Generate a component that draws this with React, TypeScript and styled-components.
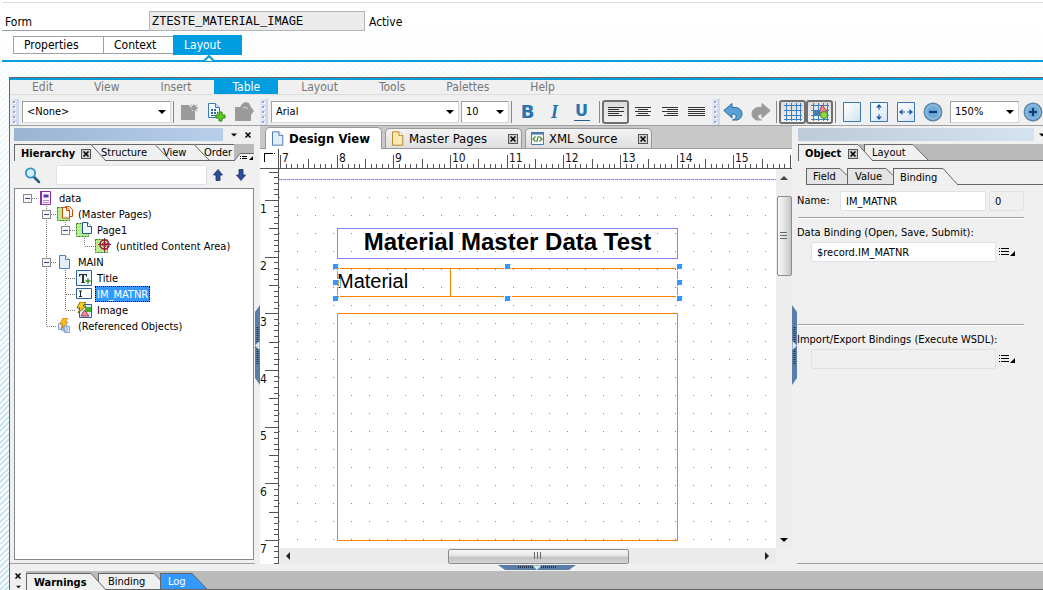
import React, { useEffect, useRef, useState } from "react";
import styled, { createGlobalStyle, css } from "styled-components";

const ui = `"DejaVu Sans Condensed", "DejaVu Sans", sans-serif`;
const c = {
  accent: "#009de0",
  face: "#f0f0f0",
  line: "#666",
  soft: "#a0a0a0",
  strip: "#bababa",
  orange: "#f78300",
  guide: "#8080ff",
  handle: "#3399ff",
};

const Global = createGlobalStyle`
  *, *::before, *::after { box-sizing: border-box; }
  body {
    margin: 0;
    font: 11px/16px ${ui};
    color: #000;
    background:
      linear-gradient(rgba(255,255,255,1) 0, rgba(255,255,255,.85) 70px, rgba(255,255,255,.1) 420px),
      repeating-linear-gradient(135deg, #c6e2f2 0 2px, #fff 2px 4px);
  }
  button, input, select {
    font: inherit; color: inherit; margin: 0; padding: 0;
    border: 0; border-radius: 0; background: none; outline: none;
  }
  svg { display: block; flex: none; }
  ul { list-style: none; margin: 0; padding: 0; }
`;

const Page = styled.div`
  height: 100vh;
  min-height: 480px;
  display: flex;
  flex-direction: column;
  overflow: hidden;
`;

/* ---------- form header ---------- */
const Header = styled.header`
  margin-left: 2px;
  margin-top: 2px;
  border-top: 1px solid #ddd;
  border-bottom: 2px solid ${c.accent};
  padding-top: 8px;
  background: rgba(255, 255, 255, 0.6);
  font-size: 12px;
`;
const FormRow = styled.div`
  display: flex;
  height: 20px;
  line-height: 22px;
`;
const FormLabel = styled.label`
  width: 147px;
  padding-left: 3px;
  border-bottom: 1px solid ${c.soft};
`;
const FormInput = styled.input`
  width: 216px;
  padding: 2px 2px 0;
  border: 1px solid #b4b4b4;
  background: #ebebeb;
  font: 12px "Liberation Mono", monospace;
`;
const Status = styled.span`
  padding-left: 4px;
`;
const FormTabs = styled.nav`
  display: flex;
  align-items: center;
  height: 20px;
  margin: 4px 0 0 11px;
`;
const FormTab = styled.button<{ $w: number; $on?: boolean }>`
  width: ${(p) => p.$w}px;
  height: ${(p) => (p.$on ? 20 : 18)}px;
  padding-left: 10px;
  text-align: left;
  border: 1px solid ${(p) => (p.$on ? c.accent : c.soft)};
  border-right-width: ${(p) => (p.$on ? 1 : 0)}px;
  background: ${(p) => (p.$on ? c.accent : "#fff")};
  color: ${(p) => (p.$on ? "#fff" : "#000")};
`;
const Notch = styled.svg`
  margin: 0 0 -1px 202px;
`;

/* ---------- editor frame ---------- */
const Editor = styled.main`
  flex: 1;
  min-height: 0;
  margin: 15px 0 0 9px;
  display: flex;
  flex-direction: column;
  border-left: 1px solid ${c.line};
  border-top: 1px solid ${c.line};
  background: ${c.face};
`;
const MenuBar = styled.nav`
  display: flex;
  flex: none;
  height: 17px;
  padding-left: 2px;
  border-top: 2px solid ${c.accent};
  border-bottom: 1px solid #dcdcdc;
`;
const MenuItem = styled.button<{ $on?: boolean }>`
  height: 14px;
  margin: 0 3px 0 2px;
  padding: 0 18px;
  font-size: 12px;
  line-height: 15px;
  color: ${(p) => (p.$on ? "#fff" : "#777")};
  background: ${(p) => (p.$on ? c.accent : "transparent")};
`;
const ToolBar = styled.div`
  display: flex;
  align-items: center;
  flex: none;
  height: 31px;
  padding: 3px 0 0 1px;
  border-bottom: 1px solid ${c.soft};
  overflow: hidden;
`;
const GripBox = styled.div`
  flex: none;
  width: 8px;
  height: 26px;
  margin-right: 3px;
  padding: 1px 2px;
  background: linear-gradient(90deg, #e4eaf6, #ccd6ec);
`;
const Rule = styled.span<{ $before?: number }>`
  flex: none;
  width: 1px;
  height: 22px;
  margin: 0 2px 0 ${(p) => p.$before ?? 0}px;
  background: #888;
`;
const Tool = styled.button<{ $pressed?: boolean; $w?: number }>`
  flex: none;
  display: grid;
  place-items: center;
  width: ${(p) => p.$w ?? 27}px;
  height: 24px;
  border-radius: 3px;
  ${(p) =>
    p.$pressed &&
    css`
      border: 2px solid #707070;
      background: linear-gradient(#dcdcdc, #f2f2f2);
    `}
`;
const Letter = styled.span<{ $i?: boolean; $u?: boolean }>`
  width: 16px;
  height: 18px;
  text-align: center;
  font: ${(p) => (p.$i ? "italic bold 18px/18px 'Liberation Serif', serif" : "bold 18px/18px 'DejaVu Sans', sans-serif")};
  ${(p) => p.$u && "font-size: 16px; line-height: 16px; border-bottom: 1px solid #1f5f9a;"}
  color: #2b72b0;
`;
const ComboBox = styled.span<{ $w: number }>`
  flex: none;
  display: grid;
  align-items: center;
  width: ${(p) => p.$w}px;
  height: 22px;
  margin-right: 2px;
  border: 1px solid #d4d8dc;
  border-top-color: ${c.soft};
  border-left-color: ${c.soft};
  background: #fff;
  select {
    grid-area: 1 / 1;
    appearance: none;
    width: 100%;
    padding-left: 4px;
  }
  svg {
    grid-area: 1 / 1;
    justify-self: end;
    margin-right: 4px;
    pointer-events: none;
  }
`;
const Gap = styled.span<{ $w: number }>`
  flex: none;
  width: ${(p) => p.$w}px;
`;

const Work = styled.div`
  flex: 1;
  min-height: 0;
  display: flex;
`;
const Side = styled.aside<{ $w: number }>`
  flex: none;
  width: ${(p) => p.$w}px;
  display: flex;
`;
const SideBody = styled.div`
  flex: 1;
  min-width: 0;
  display: flex;
  flex-direction: column;
  padding-top: 2px;
`;
const SideFoot = styled.div`
  height: 8px;
  flex: none;
  border-top: 1px solid ${c.soft};
`;
const Splitter = styled.div`
  flex: none;
  display: flex;
  align-items: center;
  width: 5px;
  padding-bottom: 7px;
`;
const TitleRow = styled.div<{ $right?: boolean }>`
  display: flex;
  flex: none;
  height: 13px;
  align-items: center;
  margin: 0 ${(p) => (p.$right ? -2 : 4)}px 3px ${(p) => (p.$right ? 1 : 4)}px;
  gap: ${(p) => (p.$right ? 5 : 8)}px;
`;
const TitleBar = styled.div<{ $from: string; $to: string }>`
  flex: 1;
  height: 13px;
  background: linear-gradient(90deg, ${(p) => p.$from}, ${(p) => p.$to});
`;
const TabStrip = styled.div<{ $bg?: string; $indent?: number; $short?: boolean }>`
  position: relative;
  z-index: 0;
  display: flex;
  align-items: flex-start;
  flex: none;
  height: 17px;
  margin-left: ${(p) => p.$indent ?? 0}px;
  margin-right: ${(p) => (p.$short ? 1 : 0)}px;
  background: ${(p) => p.$bg ?? "transparent"};
  border-bottom: 1px solid ${c.line};
`;
const TabWrap = styled.button<{ $z: number; $pull: number; $on?: boolean }>`
  position: relative;
  z-index: ${(p) => p.$z};
  display: flex;
  flex: none;
  height: ${(p) => (p.$on ? 17 : 16)}px;
  margin-left: ${(p) => -p.$pull}px;
  text-align: left;
`;
const TabFace = styled.span<{ $w: number; $pad: number; $bg: string; $bold?: boolean; $fg?: string }>`
  display: flex;
  align-items: center;
  width: ${(p) => p.$w}px;
  height: 100%;
  padding: 1px 0 0 ${(p) => p.$pad}px;
  border-top: 1px solid ${c.line};
  border-left: 1px solid ${c.line};
  background: ${(p) => p.$bg};
  color: ${(p) => p.$fg ?? "#000"};
  font-weight: ${(p) => (p.$bold ? "bold" : "normal")};
  white-space: nowrap;
`;
const CloseBox = styled.span`
  flex: none;
  display: grid;
  place-items: center;
  width: 10px;
  height: 10px;
  margin-left: auto;
  border: 1px solid #555;
  background: #d0d0d0;
`;
const StripEnd = styled.span`
  margin-left: auto;
`;

/* ---------- hierarchy ---------- */
const SearchRow = styled.div`
  display: flex;
  flex: none;
  align-items: center;
  margin: 4px 5px 3px 14px;
  height: 20px;
`;
const Field = styled.input<{ $off?: boolean }>`
  flex: 1;
  min-width: 0;
  height: 20px;
  padding: 0 5px;
  border: 1px solid #dde1ea;
  border-radius: 2px;
  background: ${(p) => (p.$off ? c.face : "#fff")};
`;
const Tree = styled.ul`
  flex: 1;
  min-height: 0;
  margin: 0 1px 3px 4px;
  padding: 1px 3px;
  border: 1px solid #828790;
  background: #fff;
  overflow: hidden;
`;
const TreeRow = styled.li`
  display: flex;
  align-items: center;
  height: 16px;
`;
const TreeIcon = styled.span`
  flex: none;
  width: 22px;
  padding-left: 1px;
`;
const TreeText = styled.span<{ $sel?: boolean }>`
  margin-left: -2px;
  padding: 0 1px;
  height: 16px;
  line-height: 16px;
  white-space: nowrap;
  border: 1px dotted ${(p) => (p.$sel ? "#000" : "transparent")};
  background: ${(p) => (p.$sel ? c.handle : "transparent")};
  color: ${(p) => (p.$sel ? "#fff" : "#000")};
`;

/* ---------- design view ---------- */
const Center = styled.section`
  flex: 1;
  min-width: 0;
  display: flex;
  flex-direction: column;
`;
const DocTabs = styled.div`
  display: flex;
  flex: none;
  align-items: flex-end;
  gap: 3px;
  height: 23px;
  padding: 0 5px;
  background: #c8c8c8;
  border-bottom: 1px solid #999;
`;
const DocTab = styled.button<{ $w: number; $on?: boolean }>`
  display: flex;
  align-items: center;
  gap: 4px;
  width: ${(p) => p.$w}px;
  height: ${(p) => (p.$on ? 22 : 20)}px;
  margin-bottom: ${(p) => (p.$on ? -1 : 0)}px;
  padding: 0 3px 0 4px;
  border: 1px solid #999;
  border-bottom: 0;
  border-radius: 5px 5px 0 0;
  background: ${(p) => (p.$on ? "#fff" : "linear-gradient(#f4f4f4, #dedede)")};
  font-size: 13px;
  font-weight: ${(p) => (p.$on ? "bold" : "normal")};
  white-space: nowrap;
`;
const Board = styled.div`
  flex: 1;
  min-height: 0;
  display: grid;
  grid-template: 20px minmax(0, 1fr) 16px / 19px minmax(0, 1fr) 16px;
  background: linear-gradient(90deg, #fff 19px, ${c.face} 19px);
`;
const RulerTop = styled.div`
  grid-column: 2 / 4;
  overflow: hidden;
  background: #fff;
`;
const RulerSide = styled.div`
  grid-row: 2 / 4;
  grid-column: 1;
  overflow: hidden;
  background: #fff;
`;
const Canvas = styled.div`
  position: relative;
  overflow: hidden;
  background: #fff;
  font-family: "Liberation Sans", sans-serif;
`;
const Obj = styled.div<{ $y: number; $h: number; $color: string }>`
  position: absolute;
  left: 58px;
  width: 341px;
  top: ${(p) => p.$y}px;
  height: ${(p) => p.$h}px;
  border: 1px solid ${(p) => p.$color};
  white-space: nowrap;
`;
const TitleText = styled.div`
  text-align: center;
  font: bold 24px/26px "Liberation Sans", sans-serif;
`;
const Caption = styled.div`
  width: 114px;
  height: 27px;
  margin-left: -1px;
  border-right: 1px solid ${c.orange};
  font-size: 20px;
  line-height: 24px;
`;
const Handle = styled.i<{ $x: number; $y: number }>`
  position: absolute;
  left: ${(p) => p.$x}px;
  top: ${(p) => p.$y}px;
  width: 6px;
  height: 6px;
  outline: 1px solid #fff;
  border: 1px solid ${c.handle};
  border-width: 1px 1px 1px 1px;
  background: ${c.handle};
  background-clip: padding-box;
  border-right-color: transparent;
  border-bottom-color: transparent;
`;
const VBar = styled.div`
  display: flex;
  flex-direction: column;
  align-items: center;
  padding: 7px 0 6px;
  background: #ededed;
`;
const HBar = styled.div`
  display: flex;
  align-items: center;
  padding: 1px 7px;
  background: #ebebeb;
`;
const Thumb = styled.div<{ $v?: boolean }>`
  display: grid;
  place-items: center;
  border: 1px solid #8c8c8c;
  border-radius: 2px;
  ${(p) =>
    p.$v
      ? css`width: 15px; height: 80px; background: linear-gradient(90deg, #f6f6f6, #e6e6e6 45%, #c4c4c4);`
      : css`width: 181px; height: 15px; background: linear-gradient(#f6f6f6, #e6e6e6 45%, #c4c4c4 55%, #d4d4d4);`}
`;
const Stretch = styled.span<{ $n: number }>`
  flex: ${(p) => p.$n};
`;
const CenterFoot = styled.div`
  display: flex;
  justify-content: center;
  flex: none;
  height: 7px;
  padding: 1px 0 0 22px;
`;

/* ---------- object palette ---------- */
const PropRow = styled.div<{ $in?: boolean }>`
  display: flex;
  align-items: center;
  flex: none;
  gap: 3px;
  height: 20px;
  padding-left: ${(p) => (p.$in ? 14 : 0)}px;
  margin-right: ${(p) => (p.$in ? 28 : 19)}px;
`;
const PropLabel = styled.label`
  white-space: nowrap;
  line-height: 18px;
`;
const NameLabel = styled(PropLabel)`
  width: 40px;
`;
const CountBox = styled.div`
  display: flex;
  width: 35px;
`;
const Divider = styled.hr`
  height: 2px;
  margin: 6px 19px 5px 1px;
  border: 0;
  border-top: 1px solid ${c.soft};
  border-bottom: 1px solid #fff;
`;
const Spacer = styled.div<{ $h: number }>`
  height: ${(p) => p.$h}px;
  flex: none;
`;
const Fill = styled.div`
  flex: 1;
`;

/* ---------- report area ---------- */
const Report = styled.footer`
  display: flex;
  flex: none;
  height: 19px;
`;
const ReportButtons = styled.div`
  width: 16px;
  display: flex;
  flex-direction: column;
  align-items: center;
  justify-content: space-between;
  padding: 2px 0 1px;
`;
const ReportStrip = styled.div`
  flex: 1;
  padding-top: 2px;
  background: ${c.strip};
`;

/* ---------- drawings ---------- */
const Down = ({ s = 8 }: { s?: number }) => (
  <svg width={s} height="4" viewBox="0 0 8 4"><path d="M0 0h8L4 4z" fill="#000" /></svg>
);
const Cross = ({ s = 6 }: { s?: number }) => (
  <svg width={s} height={s} viewBox="0 0 6 6"><path d="M.5.5l5 5M5.5.5l-5 5" stroke="#000" strokeWidth="1.5" /></svg>
);
const Grip = () => (
  <GripBox>
    <svg width="4" height="24">
      {[1, 6, 11, 16, 21].map((y) => (
        <g key={y}><rect x="1" y={y + 1} width="2" height="2" fill="#fff" /><rect y={y} width="2" height="2" fill="#9aa5c0" /></g>
      ))}
    </svg>
  </GripBox>
);
const Slant = ({ h, fill, w = 15 }: { h: number; fill: string; w?: number }) => (
  <svg width={w} height={h} viewBox={`0 0 ${w} ${h}`}>
    <path d={`M0 0L${w} ${h}H0z`} fill={fill} />
    <path d={`M0 .5L${w} ${h}`} stroke={c.line} fill="none" />
  </svg>
);
const Corner = ({ fill }: { fill: string }) => (
  <svg width="7" height="16" viewBox="0 0 7 16">
    <path d="M0 0L7 7V16H0z" fill={fill} /><path d="M0 .5L7 7.5" stroke={c.line} fill="none" />
  </svg>
);
const ListIcon = () => (
  <svg width="16" height="10" viewBox="0 0 16 10" shapeRendering="crispEdges">
    <path d="M0 1h1M0 4h1M0 7h1M2 1h8M2 4h8M2 7h8" transform="translate(0 .5)" stroke="#000" />
    <path d="M11 9h5V4z" fill="#000" shapeRendering="auto" />
  </svg>
);
const Align = ({ rows }: { rows: [number, number][] }) => (
  <svg width="18" height="9" viewBox="0 0 18 9" shapeRendering="crispEdges">
    {rows.map(([x, w], i) => <rect key={i} x={x} y={i * 2} width={w} height="1" fill="#333" />)}
  </svg>
);
const alignLeft: [number, number][] = [[1, 16], [1, 11], [1, 16], [1, 11], [1, 14]];
const alignMid: [number, number][] = [[1, 16], [4, 10], [1, 16], [4, 10], [2, 14]];
const alignRight: [number, number][] = [[1, 16], [6, 11], [1, 16], [6, 11], [3, 14]];
const alignFull: [number, number][] = [[0, 17], [0, 17], [0, 17], [0, 17], [0, 17]];

const Sheet = ({ stroke = "#4f7fb5", fill = "#e4eefa", s = 15 }: { stroke?: string; fill?: string; s?: number }) => (
  <svg width={s} height={s} viewBox="0 0 15 15">
    <path d="M2.5.8h6.500l3.800 3.800v9.600H2.500z" fill={fill} stroke={stroke} />
    <path d="M9 .8v3.800h3.800" fill="#fff" stroke={stroke} />
  </svg>
);
const GreyNew = () => (
  <svg width="18" height="18" viewBox="0 0 18 18" fill="#9b9b9b">
    <path d="M0 2h8l2 3 1 3h3v9H0z" />
    <path d="M13 0l1 3 3-2-2 3 3 1-3 1 2 3-3-2-1 3-1-3-3 2 2-3-3-1 3-1-2-3 3 2z" />
  </svg>
);
const AddPage = () => (
  <svg width="20" height="20" viewBox="0 0 20 20">
    <path d="M1.500 1.500h7l4 4v10h-11z" fill="#f2f8fd" stroke="#3a7ab8" /><path d="M8.500 1.500v4h4" fill="#cfe3f5" stroke="#3a7ab8" />
    <path d="M4 7h2v2H4zM4 10h2v2H4zM7 7h2v2H7zM7 10h2v2H7zM10 10h1v2h-1zM4 13h5v1H4z" fill="#2a6aa8" />
    <path d="M12 10h3v3h3v3h-3v3h-3v-3H9v-3h3z" fill="#5ed01f" stroke="#2c8a0c" />
  </svg>
);
const GreyOut = () => (
  <svg width="20" height="20" viewBox="0 0 20 20" fill="#9b9b9b">
    <path d="M1 5h5l2-3 3-2 4 1 2 4 3 4-3 4v6H1z" /><path d="M9 6l3-1 2 2" fill="none" stroke="#d8d8d8" />
  </svg>
);
const Undo = ({ flip }: { flip?: boolean }) => (
  <svg width="20" height="19" viewBox="0 0 20 19">
    <g transform={flip ? "translate(20 0) scale(-1 1)" : undefined}>
      <path
        d="M.8 8.500L9 1.500v4c6-1 10 2 10 6.500 0 3-2 5-4.500 6H9.500c3-1 4.500-3 3-5-1-1-2-1-3.500-1v4z"
        fill={flip ? "#9b9b9b" : "#5aa2d4"} stroke={flip ? "#9b9b9b" : "#2b6a9c"} strokeLinejoin="round"
      />
    </g>
  </svg>
);
const GridIcon = ({ shapes }: { shapes?: boolean }) => (
  <svg width="20" height="20" viewBox="0 0 20 20">
    <path d="M1 3.500h18M1 8.500h18M1 13.500h18M1 17.500h18M3.500 1v18M8.500 1v18M13.500 1v18M17.500 1v18" stroke="#3a80bd" />
    {shapes && (
      <>
        <path d="M3 9h7v5H3z" fill="#3a80bd" />
        <path d="M12 3l5 6-8 2z" fill="#e88a96" stroke="#b5394c" />
        <circle cx="14" cy="13" r="3.500" fill="#8fd84a" stroke="#4b9420" />
      </>
    )}
  </svg>
);
const ZoomPage = ({ kind }: { kind?: "v" | "h" }) => (
  <svg width="18" height="20" viewBox="0 0 18 20">
    <defs>
      <linearGradient id="zp" x2="1" y2="1"><stop stopColor="#fff" /><stop offset="1" stopColor="#d3e3f2" /></linearGradient>
    </defs>
    <path d="M.5.500h17v19H.5z" fill="url(#zp)" stroke="#3c78b0" />
    {kind === "v" && <path d="M9 2l3 3.500H9.500V8h-1V5.500H6zM9 18l3-3.500H9.500V12h-1v2.500H6z" fill="#1d5fa5" />}
    {kind === "h" && <path d="M2 10l3.500-3v2.500H8v1H5.500V13zM16 10l-3.500-3v2.500H10v1h2.500V13z" fill="#1d5fa5" />}
  </svg>
);
const Round = ({ plus }: { plus?: boolean }) => (
  <svg width="20" height="20" viewBox="0 0 20 20">
    <circle cx="10" cy="10" r="8.700" fill="#8bbce0" stroke="#5785ac" strokeWidth="1.500" />
    <circle cx="10" cy="10" r="6" fill="#6fa9d6" />
    <path d={plus ? "M6 10h8M10 6v8" : "M6 10h8"} stroke="#0e3f78" strokeWidth="2.200" />
  </svg>
);
const Lens = () => (
  <svg width="17" height="17" viewBox="0 0 17 17">
    <path d="M9.500 9.500l5.500 5.500" stroke="#245a80" strokeWidth="2.500" strokeLinecap="round" />
    <circle cx="6.500" cy="6" r="4.600" fill="#d7f1fb" stroke="#2f93bd" strokeWidth="1.800" />
  </svg>
);
const Arrow = ({ down }: { down?: boolean }) => (
  <svg width="10" height="12" viewBox="0 0 10 12">
    <path d="M5 .5L9.500 6H7v5.500H3V6H.5z" fill="#2c4f9c" stroke="#1b2f66" strokeWidth=".8" transform={down ? "rotate(180 5 6)" : undefined} />
  </svg>
);
const XmlIcon = () => (
  <svg width="15" height="13" viewBox="0 0 15 13">
    <path d="M1.500.500h12v12h-12z" fill="#f2f7fc" stroke="#4a79ab" /><path d="M1 0h13v2.500H1z" fill="#4a79ab" />
    <path d="M5.500 4.500l-2.500 2.500 2.500 2.500M9.500 4.500L12 7 9.500 9.500M8.300 4.200L6.700 10" fill="none" stroke="#4c8a1e" strokeWidth="1.200" />
  </svg>
);
const SideGrip = ({ left }: { left?: boolean }) => (
  <svg width="5" height="80" viewBox="0 0 5 80">
    <g transform={left ? undefined : "translate(5 0) scale(-1 1)"}>
      <path d="M5 0v80L0 73V7z" fill="#5a7ea6" />
      <path d="M2.500 22v15M2.500 44v15" stroke="#26374d" strokeWidth="2" strokeDasharray="1 1" />
    </g>
    <path d={left ? "M4.500 36v9L0 40.500z" : "M.5 36v9L5 40.500z"} fill="#dfe8f2" />
  </svg>
);

type IconName = "form" | "masters" | "page" | "area" | "sheet" | "text" | "input" | "image" | "refs";
const NodeIcon = ({ name }: { name: IconName }) => {
  const green = <path d="M.5 1.500h12v13H.5z" fill="#b9ee8e" stroke="#2c7a16" strokeDasharray="2 1" />;
  return (
    <svg width="16" height="16" viewBox="0 0 16 16">
      {name === "form" && (
        <>
          <path d="M2.500 1.500h10v13h-10z" fill="#fbf3ff" stroke="#8a2da8" />
          <path d="M2 1h2v14H2z" fill="#8a2da8" />
          <path d="M5.500 4.500h5v3h-5z" fill="#5a3a9a" /><path d="M5 10.500h6M5 12.500h6" stroke="#b98acb" />
        </>
      )}
      {name === "masters" && (
        <>
          {green}
          <path d="M8.500.500h4l3 3v7h-7z" fill="#fff1e0" stroke="#c8500a" />
          <path d="M5.500 1.500h4.500l2.500 2.500v8h-7z" fill="#fff8ee" stroke="#c8500a" /><path d="M9.500 2v2.500h3" fill="none" stroke="#c8500a" />
        </>
      )}
      {name === "page" && (
        <>
          {green}
          <path d="M6.500.500h5l4 4v7h-9z" fill="#eef6fd" stroke="#1e5a96" /><path d="M11.500.500v4h4" fill="#fff" stroke="#1e5a96" />
        </>
      )}
      {name === "area" && (
        <>
          {green}
          <circle cx="9.500" cy="6.500" r="4.500" fill="none" stroke="#a01842" strokeWidth="1.500" />
          <circle cx="9.500" cy="6.500" r="2" fill="none" stroke="#a01842" />
          <path d="M9.500 0v14M3 6.500h13" stroke="#a01842" />
        </>
      )}
      {name === "sheet" && (
        <>
          <path d="M2.500 1.500h6l4 4v9h-10z" fill="#e4eefa" stroke="#4f7fb5" /><path d="M8.500 1.500v4h4" fill="#fff" stroke="#4f7fb5" />
        </>
      )}
      {name === "text" && (
        <>
          <path d="M.5.500h15v15H.5z" fill="#eef5fb" stroke="#2a6298" />
          <path d="M3 4h8v2.500h-1L9.500 5H8v7l1 .500v.5H5v-.5l1-.500V5H4.500L4 6.500H3z" fill="#333" />
          <path d="M12 8.500v5M9.500 11h5" stroke="#2f9a1c" strokeWidth="1.500" />
        </>
      )}
      {name === "input" && (
        <>
          <path d="M.5 2.500h15v10H.5z" fill="#fff" stroke="#2a6298" /><path d="M3 5h3M3 10.500h3M4.500 5v5.500" stroke="#222" />
        </>
      )}
      {name === "image" && (
        <>
          <path d="M3.500 2.500h12v13h-12z" fill="#dcebf8" stroke="#2a6298" /><path d="M9 5h6v5H9z" fill="#3fae2a" />
          <path d="M8.500 8l4.500 6H5z" fill="#e8929c" stroke="#b5394c" />
          <path d="M4 0h6L7 4h3L2 11l2-5H1z" fill="#ffd21a" stroke="#5a4206" strokeWidth=".8" />
        </>
      )}
      {name === "refs" && (
        <>
          <path d="M7.500 8.500h5v6h-5zM5 7h5v6H5zM1.500 5.500h5v6h-5z" fill="#dfe9f5" stroke="#8aa8ca" />
          <path d="M6 0h5L8 4h3L4 11l2-5H3z" fill="#ffc21a" stroke="#c07808" strokeWidth=".8" />
        </>
      )}
    </svg>
  );
};

/* One 19px column of the tree: guide lines and, where asked, the collapse box. */
type Cell = "blank" | "line" | "tee" | "end" | "root" | "boxTee" | "rootBox";
const Guide = ({ kind }: { kind: Cell }) => {
  const up = kind !== "blank" && kind !== "rootBox";
  const down = kind === "line" || kind === "tee" || kind === "boxTee";
  const right = kind !== "blank" && kind !== "line";
  const box = kind === "boxTee" || kind === "rootBox" || kind === "root";
  return (
    <svg width="19" height="16" viewBox="0 0 19 16" shapeRendering="crispEdges">
      <g stroke="#777" strokeDasharray="1 1">
        {up && <path d="M9.500 0v8" />}
        {down && <path d="M9.500 8v8" />}
        {right && <path d="M10 8.500h10" />}
      </g>
      {box && <><rect x="5.500" y="4.500" width="8" height="8" fill="#f6f6f6" stroke="#8a8a8a" /><path d="M7 8.500h5" stroke="#2d4a9a" /></>}
    </svg>
  );
};

const nodes: { text: string; icon: IconName; cells: Cell[]; sel?: boolean }[] = [
  { text: "data", icon: "form", cells: ["rootBox"] },
  { text: "(Master Pages)", icon: "masters", cells: ["blank", "boxTee"] },
  { text: "Page1", icon: "page", cells: ["blank", "line", "root"] },
  { text: "(untitled Content Area)", icon: "area", cells: ["blank", "line", "blank", "end"] },
  { text: "MAIN", icon: "sheet", cells: ["blank", "boxTee"] },
  { text: "Title", icon: "text", cells: ["blank", "line", "tee"] },
  { text: "IM_MATNR", icon: "input", cells: ["blank", "line", "tee"], sel: true },
  { text: "Image", icon: "image", cells: ["blank", "line", "end"] },
  { text: "(Referenced Objects)", icon: "refs", cells: ["blank", "end"] },
];

const UNIT = 56.67;
const tickSize = (i: number) => (i % 10 === 0 ? 13 : i % 5 === 0 ? 9 : 4);
const count = (length: number, step: number) => Math.max(0, Math.floor(length / step));

/* Length of the element in pixels, kept current while the window is resized. */
function useLength(axis: "width" | "height") {
  const ref = useRef<HTMLDivElement>(null);
  const [length, setLength] = useState(0);
  useEffect(() => {
    const measure = () => setLength(ref.current ? ref.current.getBoundingClientRect()[axis] : 0);
    measure();
    window.addEventListener("resize", measure);
    return () => window.removeEventListener("resize", measure);
  }, [axis]);
  return [ref, length] as const;
}
const TopRuler = () => {
  const [ref, length] = useLength("width");
  return (
    <RulerTop ref={ref}>
      <svg width="100%" height="20" shapeRendering="crispEdges">
        {Array.from({ length: count(length, UNIT / 10) + 1 }, (_, i) => (
          <rect key={i} x={Math.round(1 + (i * UNIT) / 10)} y={19 - tickSize(i)} width="1" height={tickSize(i)} fill="#555" />
        ))}
        <rect y="19" width="100%" height="1" fill="#555" />
        {Array.from({ length: count(length + 30, UNIT) }, (_, i) => (
          <text key={i} x={Math.round(1 + i * UNIT) + 2} y="13" fontSize="12" fill="#111">{i + 7}</text>
        ))}
      </svg>
    </RulerTop>
  );
};
const LeftRuler = () => {
  const [ref, length] = useLength("height");
  return (
    <RulerSide ref={ref}>
      <svg width="19" height="100%" shapeRendering="crispEdges">
        {Array.from({ length: count(length, UNIT / 10) + 1 }, (_, i) => {
          const y = Math.round(31 + ((i - 5) * UNIT) / 10);
          return <rect key={i} x={18 - tickSize(i + 5)} y={y} width={tickSize(i + 5)} height="1" fill="#555" />;
        })}
        <rect x="18" width="1" height="100%" fill="#555" />
        {Array.from({ length: count(length + 8, UNIT) }, (_, i) => (
          <text key={i} x="0" y={Math.round(31 + i * UNIT) + 13} fontSize="12" fill="#111">{i + 1}</text>
        ))}
      </svg>
    </RulerSide>
  );
};

const Combo = ({ label, value, w }: { label: string; value: string; w: number }) => (
  <ComboBox $w={w}>
    <select aria-label={label} defaultValue={value}><option>{value}</option></select>
    <Down />
  </ComboBox>
);

type TabProps = {
  text: string; w: number; pad: number; z: number; pull?: number; on?: boolean; bold?: boolean;
  close?: boolean; bg?: string; fg?: string; end?: "slant" | "corner" | "none";
};
const Tab = ({ text, w, pad, z, pull = 0, on, bold, close, bg = c.face, fg, end = "slant" }: TabProps) => (
  <TabWrap $z={z} $pull={pull} $on={on}>
    <TabFace $w={w} $pad={pad} $bg={bg} $fg={fg} $bold={bold}>
      {text}
      {close && <CloseBox><Cross /></CloseBox>}
    </TabFace>
    {end === "slant" && <Slant h={on ? 17 : 16} fill={bg} />}
    {end === "corner" && <Corner fill={bg} />}
  </TabWrap>
);

const menus = ["Edit", "View", "Insert", "Table", "Layout", "Tools", "Palettes", "Help"];

export default function App() {
  return (
    <Page>
      <Global />
      <Header>
        <FormRow>
          <FormLabel htmlFor="form">Form</FormLabel>
          <FormInput id="form" readOnly defaultValue="ZTESTE_MATERIAL_IMAGE" />
          <Status>Active</Status>
        </FormRow>
        <FormTabs>
          <FormTab $w={90}>Properties</FormTab>
          <FormTab $w={70}>Context</FormTab>
          <FormTab $w={69} $on>Layout</FormTab>
        </FormTabs>
        <Notch width="10" height="6" viewBox="0 0 10 6">
          <path d="M0 6L5 1l5 5" fill="#fff" stroke={c.accent} strokeWidth="2" />
        </Notch>
      </Header>

      <Editor>
        <MenuBar>
          {menus.map((m) => <MenuItem key={m} $on={m === "Table"}>{m}</MenuItem>)}
        </MenuBar>
        <ToolBar>
          <Grip />
          <Combo label="Style" value="<None>" w={149} />
          <Rule />
          <Tool aria-label="New style"><GreyNew /></Tool>
          <Tool aria-label="Add page"><AddPage /></Tool>
          <Tool aria-label="Export"><GreyOut /></Tool>
          <Gap $w={3} />
          <Grip />
          <Combo label="Font" value="Arial" w={188} />
          <Combo label="Font size" value="10" w={48} />
          <Rule />
          <Tool><Letter>B</Letter></Tool>
          <Tool><Letter $i>I</Letter></Tool>
          <Tool><Letter $u>U</Letter></Tool>
          <Rule $before={4} />
          <Tool aria-label="Align left" $pressed><Align rows={alignLeft} /></Tool>
          <Tool aria-label="Centre"><Align rows={alignMid} /></Tool>
          <Tool aria-label="Align right"><Align rows={alignRight} /></Tool>
          <Tool aria-label="Justify"><Align rows={alignFull} /></Tool>
          <Gap $w={2} />
          <Grip />
          <Tool aria-label="Undo" $w={20}><Undo /></Tool>
          <Gap $w={4} />
          <Tool aria-label="Redo"><Undo flip /></Tool>
          <Rule $before={2} />
          <Tool aria-label="Show grid" $pressed><GridIcon /></Tool>
          <Tool aria-label="Snap to grid" $pressed><GridIcon shapes /></Tool>
          <Rule $before={2} />
          <Tool aria-label="Whole page"><ZoomPage /></Tool>
          <Tool aria-label="Fit height"><ZoomPage kind="v" /></Tool>
          <Tool aria-label="Fit width"><ZoomPage kind="h" /></Tool>
          <Tool aria-label="Zoom out"><Round /></Tool>
          <Gap $w={4} />
          <Combo label="Zoom" value="150%" w={69} />
          <Tool aria-label="Zoom in" $w={24}><Round plus /></Tool>
        </ToolBar>

        <Work>
          <Side $w={250}>
            <SideBody>
              <TitleRow>
                <TitleBar $from="#9ab4d2" $to="#b8cfea" />
                <Down s={6} />
                <Cross />
              </TitleRow>
              <TabStrip $bg={c.strip} $indent={4} $short>
                <Tab text="Hierarchy" w={77} pad={6} z={5} on bold close />
                <Tab text="Structure" w={64} pad={9} z={4} pull={15} />
                <Tab text="View" w={39} pad={7} z={3} pull={15} />
                <Tab text="Order" w={40} pad={9} z={2} pull={15} end="none" />
                <StripEnd>
                  <svg width="20" height="17" viewBox="0 0 20 17">
                    <path d="M0 17L6 9.500H20V17z" fill={c.face} /><path d="M0 17L6 9.500H20" fill="none" stroke={c.line} />
                    <path d="M6 12.500h1M6 14.500h1M8 12.500h5M8 14.500h5" stroke="#000" /><path d="M15 16h4v-4z" />
                  </svg>
                </StripEnd>
              </TabStrip>
              <SearchRow>
                <Lens />
                <Gap $w={15} />
                <Field aria-label="Find" />
                <Gap $w={2} />
                <Tool aria-label="Previous" $w={18}><Arrow /></Tool>
                <Gap $w={5} />
                <Tool aria-label="Next" $w={18}><Arrow down /></Tool>
              </SearchRow>
              <Tree>
                {nodes.map((n) => (
                  <TreeRow key={n.text}>
                    {n.cells.map((k, i) => <Guide key={i} kind={k} />)}
                    <TreeIcon><NodeIcon name={n.icon} /></TreeIcon>
                    <TreeText $sel={n.sel}>{n.text}</TreeText>
                  </TreeRow>
                ))}
              </Tree>
              <SideFoot />
            </SideBody>
            <Splitter><SideGrip left /></Splitter>
          </Side>

          <Center>
            <DocTabs>
              <DocTab $w={117} $on><Sheet />Design View</DocTab>
              <DocTab $w={137}><Sheet stroke="#b98a26" fill="#fbe9b4" />Master Pages<CloseBox><Cross /></CloseBox></DocTab>
              <DocTab $w={127}><XmlIcon />XML Source<CloseBox><Cross /></CloseBox></DocTab>
            </DocTabs>
            <Board>
              <svg width="19" height="20" viewBox="0 0 19 20">
                <path d="M4 4.500h11M4.500 4v10" stroke="#000" strokeWidth="1" strokeDasharray="9 1" />
                <path d="M0 19.500h19M18.500 0v20" stroke="#555" />
              </svg>
              <TopRuler />
              <LeftRuler />
              <Canvas>
                <svg width="100%" height="100%">
                  <defs>
                    <pattern id="dots" width="18" height="18" patternUnits="userSpaceOnUse">
                      <rect y="10" width="1" height="1" fill="#8080c8" />
                    </pattern>
                  </defs>
                  <rect y="18" width="100%" height="100%" fill="url(#dots)" />
                  <line x1="0" x2="100%" y1="10.500" y2="10.500" stroke={c.guide} strokeDasharray="3 1" />
                </svg>
                <Obj $y={59} $h={31} $color={c.guide}><TitleText>Material Master Data Test</TitleText></Obj>
                <Obj $y={99} $h={29} $color={c.orange}><Caption>Material</Caption></Obj>
                <Obj $y={144} $h={228} $color={c.orange} />
                {[54, 226, 398].map((x) => [95, 111, 127].map((y) =>
                  x === 226 && y === 111 ? null : <Handle key={`${x}-${y}`} $x={x} $y={y} />
                ))}
              </Canvas>
              <VBar>
                <svg width="8" height="4" viewBox="0 0 8 4"><path d="M0 4h8L4 0z" fill="#444" /></svg>
                <Spacer $h={16} />
                <Thumb $v>
                  <svg width="8" height="8"><path d="M0 .5h7M0 3.500h7M0 6.500h7" stroke="#666" /></svg>
                </Thumb>
                <Fill />
                <Down />
              </VBar>
              <HBar>
                <svg width="4" height="8" viewBox="0 0 4 8"><path d="M4 0v8L0 4z" fill="#222" /></svg>
                <Stretch $n={157} />
                <Thumb>
                  <svg width="9" height="8"><path d="M.5 0v7M3.500 0v7M6.500 0v7" stroke="#666" /></svg>
                </Thumb>
                <Stretch $n={136} />
                <svg width="4" height="8" viewBox="0 0 4 8"><path d="M0 0v8l4-4z" fill="#222" /></svg>
              </HBar>
            </Board>
            <CenterFoot>
              <svg width="78" height="5" viewBox="0 0 78 5">
                <path d="M0 0h78l-7 5H7z" fill="#5a7ea6" />
                <path d="M20 2h15M43 2h15" stroke="#26374d" strokeWidth="2" strokeDasharray="1 1" />
                <path d="M34.500.500h9L39 5z" fill="#dfe8f2" />
              </svg>
            </CenterFoot>
          </Center>

          <Side $w={251}>
            <Splitter><SideGrip /></Splitter>
            <SideBody>
              <TitleRow $right>
                <TitleBar $from="#bccada" $to="#d5e2f0" />
                <Down s={6} />
              </TitleRow>
              <TabStrip $bg={c.strip} $indent={1}>
                <Tab text="Object" w={60} pad={6} z={3} on bold close />
                <Tab text="Layout" w={49} pad={7} z={2} pull={9} />
              </TabStrip>
              <Spacer $h={7} />
              <TabStrip $indent={9}>
                <Tab text="Field" w={34} pad={6} z={1} bg="#e4e4e4" end="corner" />
                <Tab text="Value" w={39} pad={7} z={1} bg="#e4e4e4" end="corner" />
                <Tab text="Binding" w={50} pad={6} z={2} on />
              </TabStrip>
              <Spacer $h={6} />
              <PropRow>
                <NameLabel htmlFor="name">Name:</NameLabel>
                <Field id="name" defaultValue="IM_MATNR" />
                <CountBox><Field aria-label="Instance" $off readOnly defaultValue="0" /></CountBox>
              </PropRow>
              <Divider />
              <PropLabel htmlFor="binding">Data Binding (Open, Save, Submit):</PropLabel>
              <PropRow $in>
                <Field id="binding" defaultValue="$record.IM_MATNR" />
                <ListIcon />
              </PropRow>
              <Spacer $h={56} />
              <Divider />
              <PropLabel htmlFor="wsdl">Import/Export Bindings (Execute WSDL):</PropLabel>
              <PropRow $in>
                <Field id="wsdl" $off />
                <ListIcon />
              </PropRow>
              <Fill />
              <SideFoot />
            </SideBody>
          </Side>
        </Work>

        <Report>
          <ReportButtons><Cross /><Down s={5} /></ReportButtons>
          <ReportStrip>
            <TabStrip>
              <Tab text="Warnings" w={65} pad={7} z={3} on bold />
              <Tab text="Binding" w={56} pad={9} z={1} pull={8} />
              <Tab text="Log" w={32} pad={7} z={2} pull={9} bg={c.handle} fg="#fff" />
            </TabStrip>
          </ReportStrip>
        </Report>
      </Editor>
    </Page>
  );
}
